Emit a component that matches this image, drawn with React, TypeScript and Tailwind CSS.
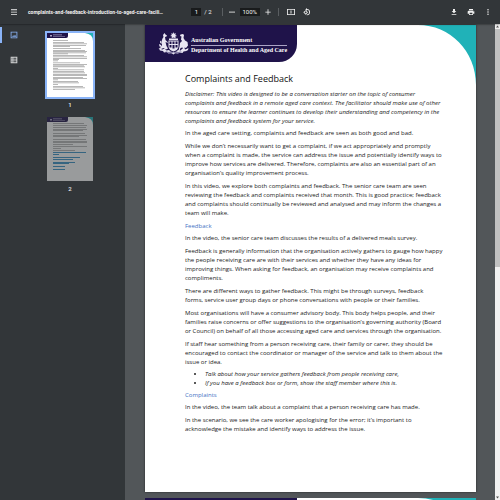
import type { ReactNode } from "react";

const iconButton = "flex size-2 shrink-0 items-center justify-center text-[#f1f1f1]";

const Icon = ({ children }: { children: ReactNode }) => (
    <svg viewBox="0 0 24 24" className="size-2 shrink-0" fill="currentColor" aria-hidden="true">
        {children}
    </svg>
);

const Toolbar = () => (
    <header className="relative z-10 flex h-6 shrink-0 items-center bg-[#323639] px-2 font-[Roboto,sans-serif] text-[#f1f1f1] shadow-[0_0_2px_rgba(0,0,0,0.7)]">
        <div className="flex min-w-0 flex-1 items-center gap-[10px] pl-[2px]">
            <button type="button" aria-label="Menu" className={iconButton}>
                <Icon>
                    <path d="M3 4h18v2.500H3zM3 11h18v2.500H3zM3 18h18v2.500H3z" />
                </Icon>
            </button>
            <h1 className="text-[5px] leading-2 font-bold whitespace-nowrap">
                complaints-and-feedback-introduction-to-aged-care-facili…
            </h1>
        </div>

        <div className="flex items-center text-[6px] leading-2">
            <input aria-label="Page number" defaultValue="1" className="h-2 w-[10px] bg-[#191b1c] text-center" />
            <span className="ml-[3px] whitespace-pre">/ 2</span>
            <span className="mr-[5px] ml-[10px] h-2 w-px bg-[#5a5e61]" />
            <button type="button" aria-label="Zoom out" className={iconButton}>
                <Icon>
                    <path d="M3 11h18v2.500H3z" />
                </Icon>
            </button>
            <input aria-label="Zoom level" defaultValue="100%" className="mx-1 h-2 w-5 bg-[#191b1c] text-center" />
            <button type="button" aria-label="Zoom in" className={iconButton}>
                <Icon>
                    <path d="M10.800 4h2.400v7H20v2.400h-6.800v7h-2.400v-7H4V11h6.800z" />
                </Icon>
            </button>
            <span className="mr-2 ml-[6px] h-2 w-px bg-[#5a5e61]" />
            <button type="button" aria-label="Fit to page" className={iconButton}>
                <Icon>
                    <path fillRule="evenodd" d="M0 3h24v18H0zM2.500 5.500v13h19v-13zM12 6.500l3.500 4h-7zM12 17.500l3.500-4h-7z" />
                </Icon>
            </button>
            <button type="button" aria-label="Rotate" className={`${iconButton} ml-2`}>
                <Icon>
                    <path d="M12 0v3a9.500 9.500 0 1 1-1 19v-2.500A7 7 0 1 0 12 5.500V9L7 4.500z" />
                    <path fillRule="evenodd" d="M8 6.500l7 6.500-7 7-7-7zm0 3.500l-3.500 3L8 16.500l3.500-3.500z" />
                </Icon>
            </button>
        </div>

        <div className="flex flex-1 items-center justify-end gap-[9px]">
            <button type="button" aria-label="Download" className={iconButton}>
                <Icon>
                    <path d="M19 9h-4V3H9v6H5l7 7 7-7zM5 18v2.500h14V18H5z" />
                </Icon>
            </button>
            <button type="button" aria-label="Print" className={iconButton}>
                <Icon>
                    <path d="M19 8H5a3 3 0 0 0-3 3v6h4v4h12v-4h4v-6a3 3 0 0 0-3-3zm-3 11H8v-5h8v5zm3-7a1 1 0 1 1 0-2 1 1 0 0 1 0 2zM18 3H6v4h12V3z" />
                </Icon>
            </button>
            <button type="button" aria-label="More actions" className={iconButton}>
                <Icon>
                    <circle cx="12" cy="5" r="2.200" />
                    <circle cx="12" cy="12" r="2.200" />
                    <circle cx="12" cy="19" r="2.200" />
                </Icon>
            </button>
        </div>
    </header>
);

// [y, width] of each text stroke in the miniature pages, in a 46x64 box
const firstPageLines = [
    [7, 15], [9, 31], [10.5, 34], [12, 33], [13, 17], [15, 28], [17, 32], [18, 34], [19.500, 33], [20.500, 15],
    [22, 31], [23.500, 34], [25, 34], [26, 6], [27.500, 5], [29.500, 27], [31, 34], [32.500, 31], [33.500, 32], [35, 5],
    [36.500, 31], [38, 31], [39.500, 32], [41, 34], [42, 34], [44, 30], [45, 34], [46.500, 5],
    [48, 25], [49.500, 26], [51, 5], [53, 30], [54.500, 32], [56, 22],
];

const secondPageLines = [
    [6, 31], [8, 34], [10, 33], [12, 34], [13, 30], [16, 32], [18, 34], [19, 26], [22, 33], [24, 34],
    [25, 34], [27, 20], [29, 34], [31, 8], [33, 22],
];

const links = [
    [35, 33], [37, 6], [40, 27], [42, 20], [45, 22], [46, 16], [49, 12], [52, 12],
];

const Miniature = ({ page }: { page: number }) => (
    <svg viewBox="0 0 46 64" className="block w-full" aria-hidden="true">
        <rect width="46" height="64" fill="#fff" />
        <path d="M0 0h21v3q0 2-2 2H0z" fill="#1f134a" />
        <path d="M3 2h2v1.500H3zM6 1.600h9v.6H6zM6 3h12v.6H6z" fill="#aaa3c4" />
        <path d="M38 0h8v8q0-7-8-8z" fill="#20b2b8" />
        {(page === 1 ? firstPageLines : secondPageLines).map(([y, width], i) => (
            <rect key={i} x="6" y={y} width={width} height="0.700" fill="#333" opacity="0.500" />
        ))}
        {page === 2 &&
            links.map(([y, width], i) => <rect key={i} x="6" y={y} width={width} height="0.800" fill="#0878b8" />)}
    </svg>
);

const Sidebar = () => (
    <aside className="flex w-1/4 shrink-0 bg-[#323639] font-[Roboto,sans-serif]">
        <nav className="flex w-7 flex-col gap-[9px] pt-[3px]">
            <button
                type="button"
                aria-label="Thumbnails"
                className="flex h-4 items-center border-l-2 border-[#8ab4f8] pl-2 text-[#8ab4f8]"
            >
                <Icon>
                    <path fillRule="evenodd" d="M2 2h20v20H2zM4.500 4.500v15h15v-15zM6 17l3.500-4.500 2.500 3 3-4L19 17z" />
                </Icon>
            </button>
            <button type="button" aria-label="Document outline" className="flex h-4 items-center pl-[10px] text-[#d5d6d7]">
                <Icon>
                    <path fillRule="evenodd" d="M2 2h20v20H2zM4.500 5v3h3V5zm5.500 0v3h9V5zM4.500 10.500v3h3v-3zm5.500 0v3h9v-3zM4.500 16v3h3v-3zm5.500 0v3h9v-3z" />
                </Icon>
            </button>
        </nav>
        <div className="flex flex-1 flex-col items-center gap-[6px] pt-[7px] pr-[13px] text-[6px] leading-2 font-medium text-[#e8eaed]">
            <button type="button" className="flex flex-col items-center gap-[2px]">
                <span className="w-[50px] border-2 border-[#8ab4f8]">
                    <Miniature page={1} />
                </span>
                1
            </button>
            <button type="button" className="flex flex-col items-center gap-[2px]">
                <span className="w-[50px] border-2 border-transparent">
                    <span className="block opacity-50">
                        <Miniature page={2} />
                    </span>
                </span>
                2
            </button>
        </div>
    </aside>
);

const Crest = () => (
    <svg viewBox="0 0 62 46" className="w-[31px] shrink-0" fill="#e9e6f2" aria-hidden="true">
        <path d="M31 0l1.500 3.500 3.500-1-1.500 3.500L38 8l-3.500 1 1 3.500L31 11l-4 1.500 1-3.500-3.500-1 3-2-1-3.500 3.500 1z" />
        <path d="M22 13h18v3H22z" />
        <path fillRule="evenodd" d="M21 17h20v13q-2 7-10 9-8-2-10-9zM23 19v5h4v-5zm6 0v5h4v-5zm6 0v5h4v-5zM23 26v5h4v-5zm6 0v7h4v-7zm6 0v5h4v-5z" />
        <path d="M13 2l2 3 3 2-1 2-3 1 1 6 4 4 1 2-5-2 2 8 3 5-4 2-5-3-5 2-5-1 4-2 3-5-1-7 2-6 2-3-1-4z" />
        <path d="M45 5l5-1 2 2-1 6 3 5 5 3 1 7-4 5-3-1 1 6-2 1-3-7-4 1-2 6-2-1 2-8 1-7 4-4-2-3 1-6-3-1z" />
        <path d="M2 33l7 2 4-2 4 4 5-1 4 4h10l4-4 5 1 4-4 5 2 6-2-3 5-6 1-2 3-6-1-3 2-5-1-4 3-5-3-5 1-3-3-6 1-2-3-6-1z" />
        <path d="M2 24l4 2 1 4-4-1zM4 17l3 3v4l-3-3zM58 34l3-2-1 4-3 2z" />
        <path d="M14 38l7 2 6-1 4 2 5-2 5 1 7-2-5 4-7 1-5-1-5 1-7-1z" fill="#8880a8" />
    </svg>
);

const PaperHeader = ({ children }: { children?: ReactNode }) => (
    <div className="flex items-start justify-between">
        <div className="flex h-[37px] w-[152px] items-center gap-[2px] rounded-br-[18px] bg-[#1f134a] pl-[13px] font-['Liberation_Serif',serif] text-[6px] font-bold whitespace-nowrap text-white">
            {children}
        </div>
        <svg viewBox="0 0 60 60" className="size-[60px]" fill="#20b2b8" aria-hidden="true">
            <path d="M2 0H60V60C60 26 34 0 2 0z" />
        </svg>
    </div>
);

const Heading = ({ children }: { children: ReactNode }) => (
    <h3 className="mb-[3px] text-[#4472c4]">{children}</h3>
);

const Paragraph = ({ children }: { children: string }) => (
    <p className="mb-1 whitespace-pre-line">{children}</p>
);

const Paper = () => (
    <article className="aspect-[331/467] w-full shrink-0 bg-white shadow-[0_0_2px_rgba(0,0,0,0.6)]">
        <PaperHeader>
            <Crest />
            <div className="pt-1">
                <p className="border-b border-[#aaa3c4] pb-px leading-[7px]">Australian Government</p>
                <p className="pt-px leading-[7px]">Department of Health and Aged Care</p>
            </div>
        </PaperHeader>
        <div className="-mt-3 ml-10 font-['Open_Sans',sans-serif] text-[6px] leading-[9px] text-[#222]">
            <h2 className="mb-[5px] text-[9px] leading-3 text-[#111]">Complaints and Feedback</h2>
            <p className="mb-[3px] whitespace-pre-line italic">
                {`Disclaimer: This video is designed to be a conversation starter on the topic of consumer
                complaints and feedback in a remote aged care context. The facilitator should make use of other
                resources to ensure the learner continues to develop their understanding and competency in the
                complaints and feedback system for your service.`}
            </p>
            <Paragraph>In the aged care setting, complaints and feedback are seen as both good and bad.</Paragraph>
            <Paragraph>
                {`While we don’t necessarily want to get a complaint, if we act appropriately and promptly
                when a complaint is made, the service can address the issue and potentially identify ways to
                improve how services are delivered. Therefore, complaints are also an essential part of an
                organisation’s quality improvement process.`}
            </Paragraph>
            <Paragraph>
                {`In this video, we explore both complaints and feedback. The senior care team are seen
                reviewing the feedback and complaints received that month. This is good practice; feedback
                and complaints should continually be reviewed and analysed and may inform the changes a
                team will make.`}
            </Paragraph>
            <Heading>Feedback</Heading>
            <Paragraph>In the video, the senior care team discusses the results of a delivered meals survey.</Paragraph>
            <Paragraph>
                {`Feedback is generally information that the organisation actively gathers to gauge how happy
                the people receiving care are with their services and whether they have any ideas for
                improving things. When asking for feedback, an organisation may receive complaints and
                compliments.`}
            </Paragraph>
            <Paragraph>
                {`There are different ways to gather feedback. This might be through surveys, feedback
                forms, service user group days or phone conversations with people or their families.`}
            </Paragraph>
            <Paragraph>
                {`Most organisations will have a consumer advisory body. This body helps people, and their
                families raise concerns or offer suggestions to the organisation’s governing authority (Board
                or Council) on behalf of all those accessing aged care and services through the organisation.`}
            </Paragraph>
            <p className="mb-[3px] whitespace-pre-line">
                {`If staff hear something from a person receiving care, their family or carer, they should be
                encouraged to contact the coordinator or manager of the service and talk to them about the
                issue or idea.`}
            </p>
            <ul className="mb-[3px] list-disc pl-5 italic">
                <li>Talk about how your service gathers feedback from people receiving care,</li>
                <li>If you have a feedback box or form, show the staff member where this is.</li>
            </ul>
            <Heading>Complaints</Heading>
            <Paragraph>In the video, the team talk about a complaint that a person receiving care has made.</Paragraph>
            <Paragraph>
                {`In the scenario, we see the care worker apologising for the error; it’s important to
                acknowledge the mistake and identify ways to address the issue.`}
            </Paragraph>
        </div>
    </article>
);

const NextPaper = () => (
    <article className="w-full shrink-0 bg-white">
        <PaperHeader />
    </article>
);

const Scrollbar = () => (
    <div className="flex w-[5px] shrink-0 flex-col items-center bg-[#f1f1f1] text-[#505050]">
        <svg viewBox="0 0 5 5" className="size-[5px] shrink-0" fill="currentColor" aria-hidden="true">
            <path d="M2.500 1.500L4 3.500H1z" />
        </svg>
        <div className="h-1/2 w-full bg-[#c1c1c1]" />
        <svg viewBox="0 0 5 5" className="mt-auto size-[5px] shrink-0" fill="currentColor" aria-hidden="true">
            <path d="M2.500 3.500L4 1.500H1z" />
        </svg>
    </div>
);

export default function App() {
    return (
        <div className="flex h-screen flex-col overflow-hidden bg-[#525659]">
            <Toolbar />
            <div className="flex min-h-0 flex-1">
                <Sidebar />
                <main className="flex min-w-0 flex-1 flex-col gap-[6px] overflow-hidden pt-px pr-[19px] pl-5">
                    <Paper />
                    <NextPaper />
                </main>
                <Scrollbar />
            </div>
        </div>
    );
}
